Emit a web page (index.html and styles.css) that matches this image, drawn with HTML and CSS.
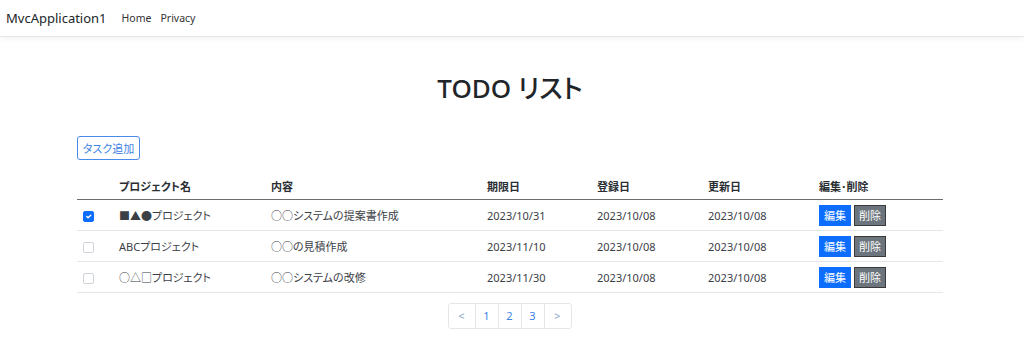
FILE: index.html
```html
<!DOCTYPE html>
<html lang="ja">
<head>
    <meta charset="UTF-8">
    <meta name="viewport" content="width=device-width, initial-scale=1.0">
    <title>TODO リスト - MvcApplication1</title>
    <link rel="stylesheet" href="styles.css">
</head>
<body>
    <header class="navbar">
        <a class="navbar-brand" href="#">MvcApplication1</a>
        <nav class="navbar-nav">
            <a href="#">Home</a>
            <a href="#">Privacy</a>
        </nav>
    </header>

    <main class="container">
        <h1 class="page-title">TODO リスト</h1>

        <button class="btn-add">タスク追加</button>

        <table class="todo-table">
            <thead>
                <tr>
                    <th class="col-check"></th>
                    <th class="col-project">プロジェクト名</th>
                    <th class="col-content">内容</th>
                    <th class="col-due">期限日</th>
                    <th class="col-date">登録日</th>
                    <th class="col-date">更新日</th>
                    <th>編集･削除</th>
                </tr>
            </thead>
            <tbody>
                <tr>
                    <td class="col-check"><input type="checkbox" checked></td>
                    <td>■▲●プロジェクト</td>
                    <td>○○システムの提案書作成</td>
                    <td>2023/10/31</td>
                    <td>2023/10/08</td>
                    <td>2023/10/08</td>
                    <td class="actions"><button class="btn-edit">編集</button><button class="btn-delete">削除</button></td>
                </tr>
                <tr>
                    <td class="col-check"><input type="checkbox"></td>
                    <td>ABCプロジェクト</td>
                    <td>○○の見積作成</td>
                    <td>2023/11/10</td>
                    <td>2023/10/08</td>
                    <td>2023/10/08</td>
                    <td class="actions"><button class="btn-edit">編集</button><button class="btn-delete">削除</button></td>
                </tr>
                <tr>
                    <td class="col-check"><input type="checkbox"></td>
                    <td>○△□プロジェクト</td>
                    <td>○○システムの改修</td>
                    <td>2023/11/30</td>
                    <td>2023/10/08</td>
                    <td>2023/10/08</td>
                    <td class="actions"><button class="btn-edit">編集</button><button class="btn-delete">削除</button></td>
                </tr>
            </tbody>
        </table>

        <ul class="pagination">
            <li class="page-arrow"><a href="#">&lt;</a></li>
            <li><a href="#">1</a></li>
            <li><a href="#">2</a></li>
            <li><a href="#">3</a></li>
            <li class="page-arrow"><a href="#">&gt;</a></li>
        </ul>
    </main>
</body>
</html>
```

FILE: styles.css
```css
body {
    font-family: "Noto Sans", "Noto Sans CJK JP", sans-serif;
    font-feature-settings: "palt";
    margin: 0;
    padding: 0;
    color: #212529;
    background-color: #fff;
    font-size: 11px;
}

a {
    text-decoration: none;
}

.navbar {
    display: flex;
    align-items: center;
    height: 37px;
    padding: 0 6px;
    border-bottom: 1px solid #e6e6e6;
    box-shadow: 0 2px 6px rgba(0, 0, 0, 0.05);
    box-sizing: border-box;
}

.navbar-brand {
    font-size: 13px;
    color: #212529;
    margin-right: 15px;
}

.navbar-nav {
    display: flex;
    gap: 9px;
}

.navbar-nav a {
    color: #333;
    font-size: 10.5px;
}

.container {
    margin: 0 81px 0 77px;
}

.page-title {
    text-align: center;
    font-size: 26px;
    font-weight: 500;
    margin: 34px 0 31px;
    line-height: 34px;
}

.btn-add {
    font-family: inherit;
    font-feature-settings: "palt";
    font-size: 11px;
    color: #3d82e6;
    background: #fff;
    border: 1px solid #4a8ae8;
    border-radius: 3px;
    width: 63px;
    height: 24px;
    padding: 0;
    cursor: pointer;
}

.todo-table {
    width: 100%;
    table-layout: fixed;
    border-collapse: collapse;
    margin-top: 18px;
}

.todo-table th {
    text-align: left;
    font-weight: 600;
    height: 21px;
    padding: 0;
    vertical-align: top;
    color: #2a2e33;
    border-bottom: 1px solid #6c6c6c;
}

.todo-table td {
    height: 30px;
    padding: 0;
    color: #3b4046;
    border-bottom: 1px solid #e3e6ea;
    white-space: nowrap;
}

.col-check {
    width: 42px;
}

.todo-table td.col-check {
    padding-left: 6px;
}

.col-check input {
    appearance: none;
    -webkit-appearance: none;
    width: 11px;
    height: 11px;
    margin: 0;
    vertical-align: middle;
    border: 1px solid #ced4da;
    border-radius: 2px;
    background: #fff;
    box-sizing: border-box;
}

.col-check input:checked {
    background: #0d6efd url("data:image/svg+xml,%3Csvg xmlns='http://www.w3.org/2000/svg' viewBox='0 0 20 20'%3E%3Cpath fill='none' stroke='%23fff' stroke-linecap='round' stroke-linejoin='round' stroke-width='3' d='M6 10l3 3 6-6'/%3E%3C/svg%3E") center / 100% no-repeat;
    border-color: #0d6efd;
}

.col-project {
    width: 152px;
}

.col-content {
    width: 216px;
}

.col-due {
    width: 110px;
}

.col-date {
    width: 111px;
}

.actions button {
    font-family: inherit;
    font-size: 11px;
    color: #fff;
    height: 21px;
    width: 32px;
    padding: 0;
    margin-right: 3px;
    border: 1px solid #555;
    cursor: pointer;
}

.todo-table td.actions button.btn-edit {
    background: #0d6efd;
    border-color: #0d6efd;
}

.todo-table td.actions button.btn-delete {
    background: #6c757d;
    border-color: #3a3a3a;
}

.pagination {
    display: flex;
    justify-content: center;
    list-style: none;
    padding: 0;
    margin: 10px 0 0;
}

.pagination li a {
    display: block;
    height: 24px;
    line-height: 24px;
    min-width: 22px;
    text-align: center;
    color: #3d82e6;
    border: 1px solid #e3e6ea;
    margin-left: -1px;
}

.pagination li.page-arrow a {
    min-width: 26px;
    color: #8aa4c8;
}

.pagination li:first-child a {
    border-radius: 3px 0 0 3px;
}

.pagination li:last-child a {
    border-radius: 0 3px 3px 0;
}
```
